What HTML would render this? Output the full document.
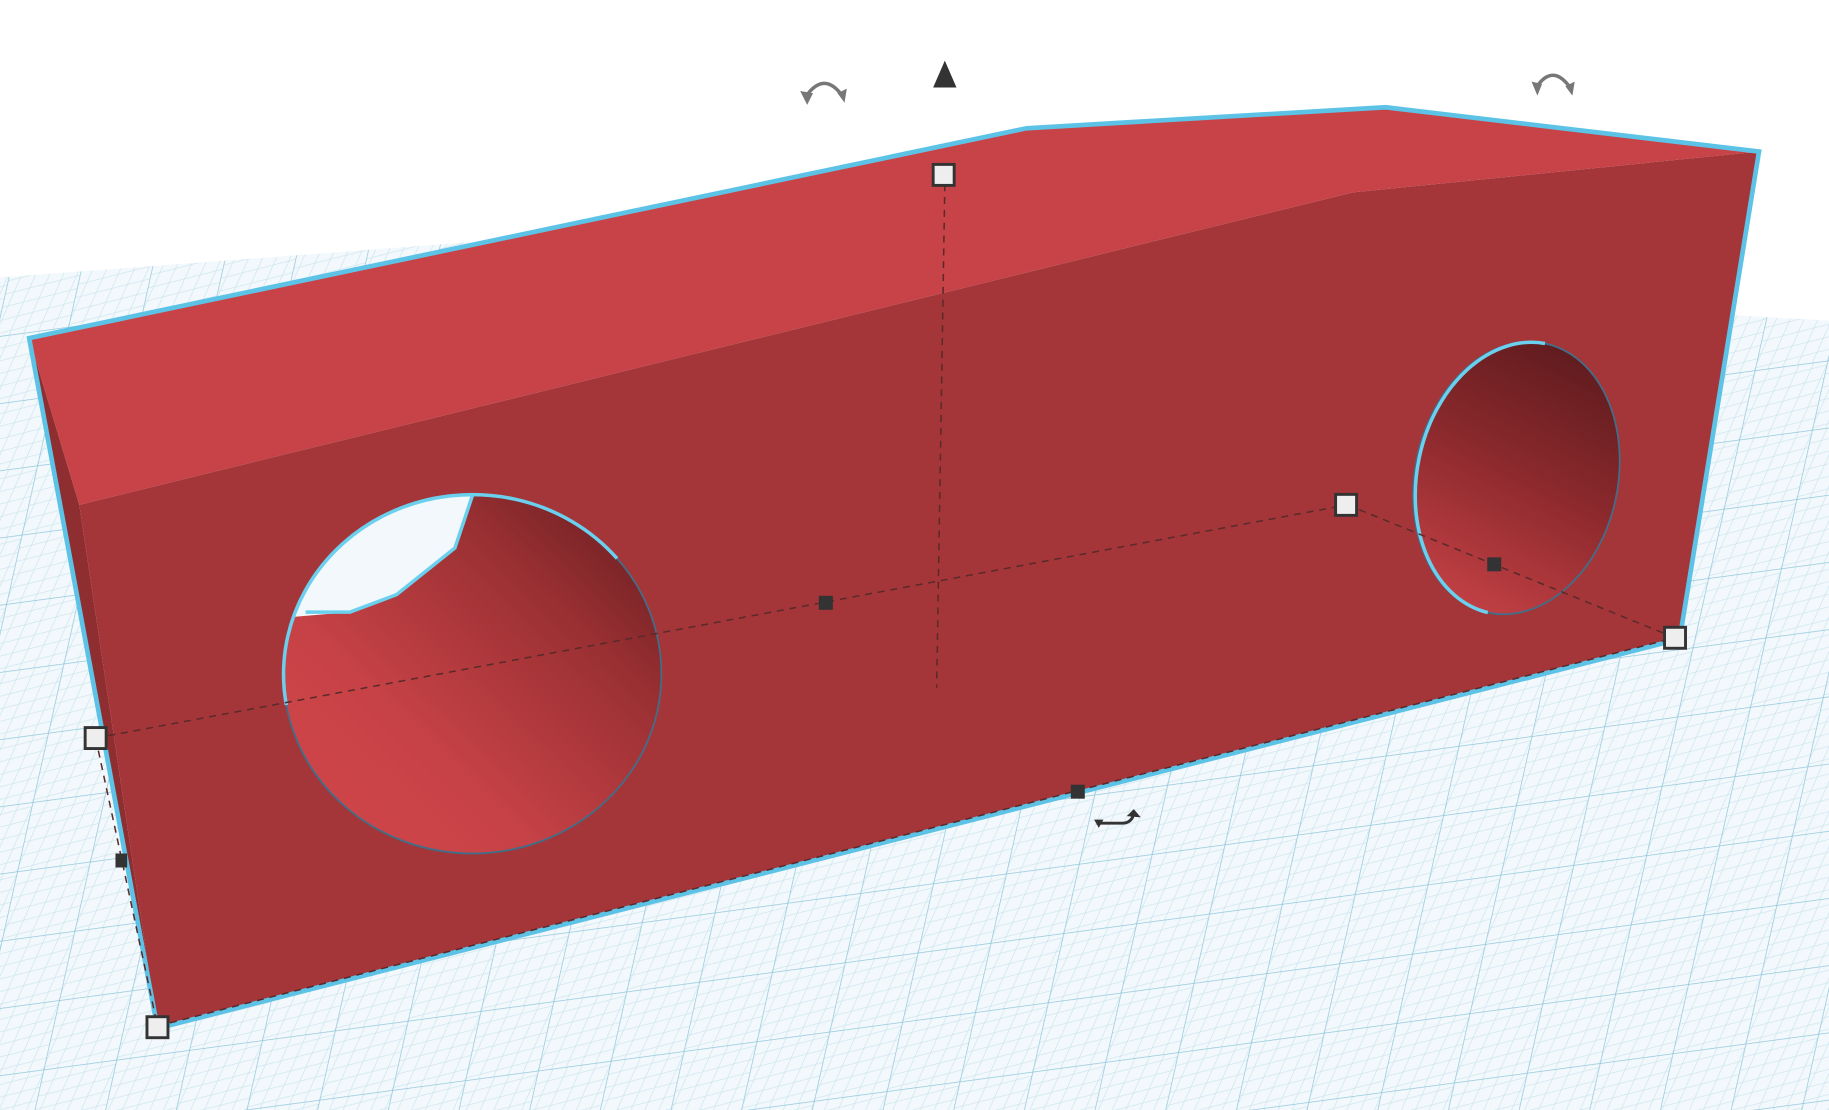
<!DOCTYPE html>
<html><head><meta charset="utf-8"><style>
html,body{margin:0;padding:0;width:1829px;height:1110px;overflow:hidden;background:#fff}
svg{display:block}
</style></head><body>
<svg width="1829" height="1110" viewBox="0 0 1568 952" preserveAspectRatio="none" xmlns="http://www.w3.org/2000/svg">
<defs>
<pattern id="g" width="12" height="12" patternUnits="userSpaceOnUse" patternTransform="skewX(-20) rotate(-8)">
<rect width="12" height="12" fill="#f2f8fb"/>
<path d="M0 0H12M0 0V12" stroke="#c3e0ec" stroke-width="1"/>
</pattern>
<pattern id="G" width="60" height="60" patternUnits="userSpaceOnUse" patternTransform="skewX(-20) rotate(-8)">
<rect width="60" height="60" fill="url(#g)"/>
<path d="M0 0H60M0 0V60" stroke="#8fc6dc" stroke-width="1.2"/>
</pattern>
<linearGradient id="h1" x1="0" y1="1" x2="1" y2="0">
<stop offset="0" stop-color="#d4474b"/><stop offset="0.35" stop-color="#c64246"/><stop offset="0.7" stop-color="#9a3033"/><stop offset="1" stop-color="#5e1a1d"/>
</linearGradient>
<linearGradient id="h2" x1="0.3" y1="1" x2="0.7" y2="0">
<stop offset="0" stop-color="#c84347"/><stop offset="0.5" stop-color="#8e2a2e"/><stop offset="1" stop-color="#5a1a1c"/>
</linearGradient>
<clipPath id="c1"><ellipse cx="405" cy="578" rx="162" ry="154"/></clipPath>
<clipPath id="c2"><ellipse cx="1300" cy="410" rx="87" ry="118" transform="rotate(12 1300 410)"/></clipPath>
</defs>
<rect width="1568" height="952" fill="#fff"/>
<polygon points="0,238 400,208 1568,275 1568,952 0,952" fill="url(#G)"/>
<polygon points="25,290 68,433 135,882" fill="#8f2e31"/>
<polygon points="25,290 880,110 1188,92 1508,130 1160,165 68,433" fill="#c84347"/>
<polygon points="68,433 1160,165 1508,130 1440,548 135,882" fill="#a4363a"/>
<!-- left hole -->
<g clip-path="url(#c1)">
<rect x="240" y="420" width="330" height="320" fill="url(#h1)"/>
<polygon points="240,420 405,420 390,470 340,510 300,525 240,530" fill="#f2f8fb"/>
</g>
<ellipse cx="405" cy="578" rx="162" ry="154" fill="none" stroke="#3f6f8a" stroke-width="1.5"/>
<path d="M262,525 L300,525 L340,510 L390,470 L405,425" fill="none" stroke="#6ad0ee" stroke-width="3"/>
<path d="M245.5,604.7 A162,154 0 0,1 529,479" fill="none" stroke="#6ad0ee" stroke-width="3"/>
<!-- right hole -->
<g clip-path="url(#c2)"><rect x="1200" y="280" width="200" height="260" fill="url(#h2)"/></g>
<ellipse cx="1300" cy="410" rx="87" ry="118" transform="rotate(12 1300 410)" fill="none" stroke="#3f6f8a" stroke-width="1.5"/>
<path d="M1324.5,294.6 A87,118 12 0,0 1275.5,525.4" fill="none" stroke="#6ad0ee" stroke-width="3"/>
<polygon points="25,290 880,110 1188,92 1508,130 1440,548 135,882" fill="none" stroke="#5cc3e6" stroke-width="4"/>
<g stroke="#5a2a2a" stroke-width="1.3" stroke-dasharray="6,5" fill="none">
<line x1="810" y1="158" x2="803" y2="590"/>
<line x1="82" y1="633" x2="1155" y2="433"/>
<line x1="1155" y1="433" x2="1436" y2="547"/>
<line x1="82" y1="633" x2="135" y2="880"/>
<line x1="135" y1="880" x2="1436" y2="547"/>
</g>
<g fill="#eeeeee" stroke="#333" stroke-width="2.5">
<rect x="800" y="141" width="18" height="18"/>
<rect x="73" y="624" width="18" height="18"/>
<rect x="126" y="872" width="18" height="18"/>
<rect x="1145" y="424" width="18" height="18"/>
<rect x="1427" y="538" width="18" height="18"/>
</g>
<g fill="#333">
<rect x="702" y="511" width="12" height="12"/>
<rect x="1275" y="478" width="12" height="12"/>
<rect x="918" y="673" width="12" height="12"/>
<rect x="99" y="732" width="10" height="12"/>
<polygon points="810,52 800,75 820,75"/>
</g>
<g fill="none" stroke="#777" stroke-width="3">
<path d="M690,84 Q706,60 722,82"/><path d="M1317,75 Q1331,54 1346,75"/>
</g>
<g fill="#777">
<polygon points="686,78 692,90 697,80"/><polygon points="726,76 718,80 724,88"/>
<polygon points="1313,70 1318,82 1322,72"/><polygon points="1350,70 1342,74 1348,82"/>
</g>
<path d="M940,706 L962,706 Q970,706 972,698" fill="none" stroke="#333" stroke-width="2.5"/>
<polygon points="966,700 972,694 978,701" fill="#333"/>
<polygon points="938,703 946,703 942,710" fill="#333"/>
</svg>
</body></html>
